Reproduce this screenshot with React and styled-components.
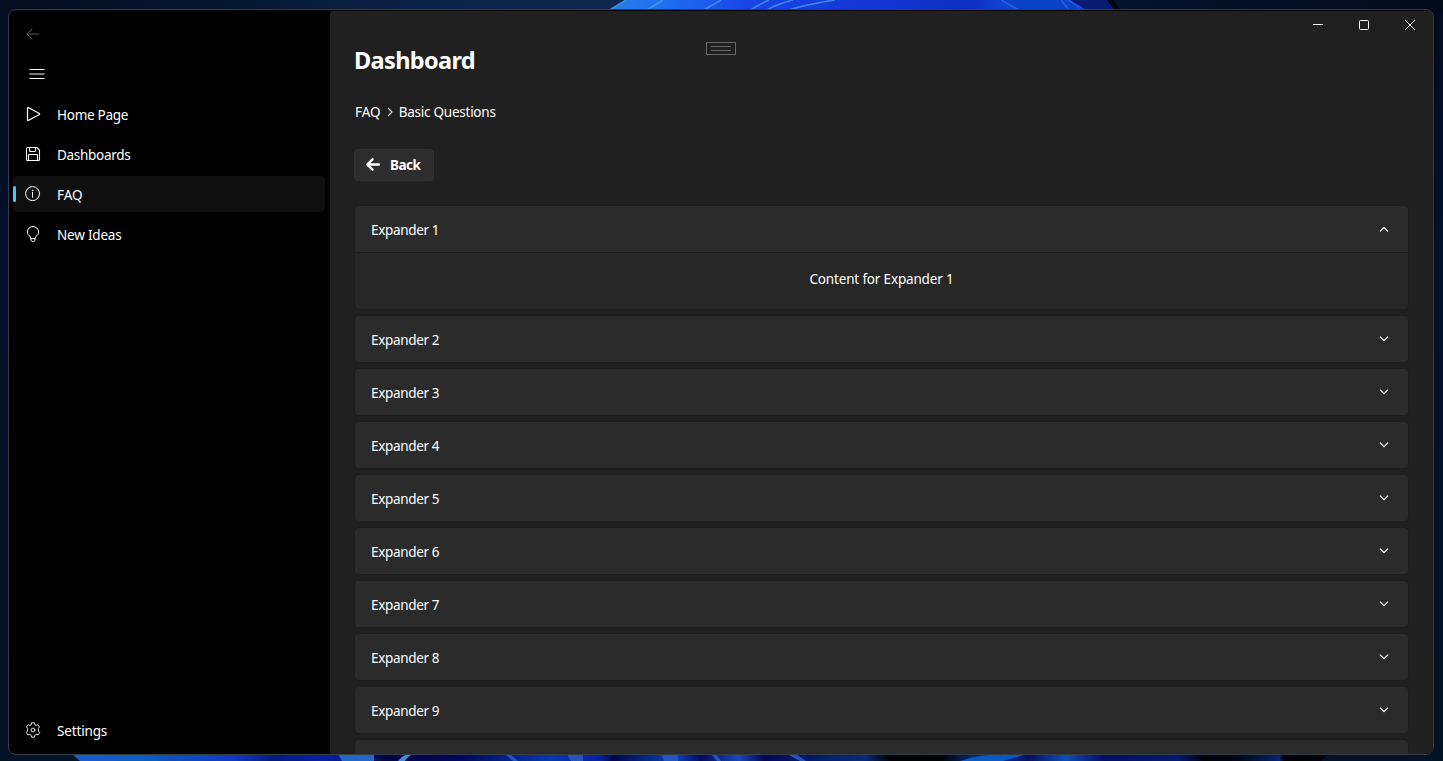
import React, { useState } from "react";
import styled, { createGlobalStyle } from "styled-components";

const GlobalStyle = createGlobalStyle`
  * { box-sizing: border-box; }
  html, body { margin: 0; width: 100%; height: 100%; overflow: hidden; background: #020c1c; }
  body {
    font-family: "Noto Sans", "Open Sans", sans-serif;
    font-size: 13.5px;
    line-height: 20px;
    color: #fff;
  }
  #root { height: 100%; }
  button { font: inherit; color: inherit; border: 0; background: none; padding: 0; }
  svg { display: block; flex: none; }
`;

const Desktop = styled.div`
  position: relative;
  height: 761px;
  width: 1443px;
  padding: 9px 9px 6px 8px;
  overflow: hidden;
`;

const WallpaperSvg = styled.svg`
  position: absolute;
  inset: 0;
`;

const Window = styled.div`
  position: relative;
  height: 746px;
  display: flex;
  border: 1px solid #333c4b;
  border-radius: 8px;
  overflow: hidden;
  background: #000;
`;

const Sidebar = styled.nav`
  width: 321px;
  flex: none;
  display: flex;
  flex-direction: column;
  padding: 9px 5px 6px 4px;
`;

const IconButton = styled.button`
  width: 40px;
  height: 30px;
  display: flex;
  align-items: center;
  justify-content: center;
  color: ${(p) => (p.$dim ? "#5a5a5a" : "#fff")};
`;

const MenuButton = styled(IconButton)`
  width: 48px;
  height: 40px;
  margin: 5px 0 2px;
`;

const NavList = styled.div`
  display: flex;
  flex-direction: column;
  gap: 4px;
  flex: 1;
`;

const NavItem = styled.button`
  position: relative;
  width: 312px;
  height: 36px;
  display: flex;
  align-items: center;
  text-align: left;
  gap: 16px;
  padding: 0 12px;
  border-radius: 4px;
  background: ${(p) => (p.$active ? "#0f0f0f" : "transparent")};
  &::before {
    content: "";
    display: ${(p) => (p.$active ? "block" : "none")};
    position: absolute;
    left: 0;
    top: 10px;
    width: 3px;
    height: 16px;
    border-radius: 2px;
    background: #4cc2ff;
  }
`;

const Label = styled.span`
  padding-top: ${(p) => (p.$raised ? 0 : 2)}px;
  letter-spacing: ${(p) => p.$track || 0}px;
  white-space: nowrap;
`;

const Main = styled.main`
  position: relative;
  flex: 1;
  min-width: 0;
  margin-top: 1px;
  background: #202020;
  border-top-left-radius: 3px;
  padding: 34px 24px 0;
`;

const Title = styled.h1`
  margin: 0;
  font-size: 23.5px;
  line-height: 30px;
  font-weight: 700;
  letter-spacing: -0.65px;
`;

const Crumbs = styled.div`
  display: flex;
  align-items: center;
  height: 20px;
  margin: 27px 0 27px 1px;
  gap: 6px;
`;

const BackButton = styled.button`
  display: flex;
  align-items: center;
  width: 80px;
  height: 32px;
  padding-left: 10px;
  gap: 9px;
  border: 1px solid #323232;
  border-radius: 4px;
  background: #2d2d2d;
  font-weight: 700;
`;

const Expanders = styled.div`
  display: flex;
  flex-direction: column;
  gap: 5px;
  margin-top: 24px;
`;

const Card = styled.section`
  border: 1px solid #1d1d1d;
  border-radius: 5px;
  overflow: hidden;
  width: 1055px;
`;

const CardHeader = styled.button`
  display: flex;
  align-items: center;
  justify-content: space-between;
  width: 100%;
  height: 46px;
  padding: 0 19px 0 16px;
  background: #2b2b2b;
`;

const NextCard = styled.div`
  height: 15px;
  width: 1055px;
  border: 1px solid #1d1d1d;
  border-bottom: 0;
  border-radius: 5px 5px 0 0;
  background: #2b2b2b;
`;

const CardBody = styled.div`
  height: 57px;
  display: flex;
  align-items: center;
  justify-content: center;
  padding-bottom: 6px;
  border-top: 1px solid #1d1d1d;
  background: #272727;
`;

const Caption = styled.div`
  position: absolute;
  top: 0;
  right: 0;
  display: flex;
`;

const CaptionButton = styled.button`
  width: 46px;
  height: 28px;
  display: flex;
  align-items: center;
  justify-content: center;
`;

const DebugBar = styled.div`
  position: absolute;
  left: 376px;
  top: 31px;
  width: 30px;
  height: 13px;
  border: 1px solid #686868;
  display: flex;
  align-items: center;
  justify-content: center;
  &::before {
    content: "";
    width: 20px;
    height: 3px;
    border: solid #686868;
    border-width: 1px 0;
  }
`;

const Stroke = ({ size = 16, width = 1, children }) => (
  <svg
    width={size}
    height={size}
    viewBox={`0 0 ${size} ${size}`}
    fill="none"
    stroke="currentColor"
    strokeWidth={width}
    strokeLinecap="round"
    strokeLinejoin="round"
  >
    {children}
  </svg>
);

const icons = {
  play: (
    <Stroke width={1.2}>
      <path d="M2.5 1.9v12.2c0 .4.4.6.8.4L14.4 8.5c.4-.3.4-.7 0-1L3.3 1.5c-.4-.2-.8 0-.8.4z" />
    </Stroke>
  ),
  save: (
    <Stroke width={1.1}>
      <path d="M2.5 1.5h9.3l2.7 2.7v9.3a1 1 0 0 1-1 1h-11a1 1 0 0 1-1-1v-11a1 1 0 0 1 1-1zM4.5 1.5v3a1 1 0 0 0 1 1h4a1 1 0 0 0 1-1v-3M3.5 14.5V9.3a.8.8 0 0 1 .8-.8h7.4a.8.8 0 0 1 .8.8v5.2" />
    </Stroke>
  ),
  info: (
    <Stroke>
      <circle cx="7.6" cy="7.6" r="7" />
      <path d="M7.5 6.5v4.7" />
      <circle cx="7.5" cy="4.5" r=".4" fill="currentColor" />
    </Stroke>
  ),
  bulb: (
    <Stroke>
      <path d="M5.8 12.3 5 10.2C3.1 9.1 2.4 7.8 2.4 6a5.6 5.5 0 0 1 11.2 0c0 1.8-.8 3.1-2.6 4.2l-.8 2.1zM5.8 12.3l.4 2.2c.1.7.5 1 1.1 1h1.4c.6 0 1-.3 1.1-1l.4-2.2" />
    </Stroke>
  ),
  gear: (
    <Stroke width={0.9}>
      <path d="M6.6.8h2.8l.4 1.8 1.3.7 1.8-.5L14.5 5l-1.2 1.5a5 5 0 0 1 0 2.5l1.4 1.4-1.5 2.4-1.9-.4-1.5.9-.5 1.9H6.7l-.5-1.9-1.5-.9-1.9.4-1.5-2.4 1.4-1.4a5 5 0 0 1 0-2.5L1.5 5l1.6-2.2 1.8.5 1.3-.7z" />
      <circle cx="8" cy="8" r="1.9" />
    </Stroke>
  ),
};

const Chevron = ({ open }) => (
  <Stroke size={10} width={1.15}>
    <path d={open ? "M1.3 7.1 5 3.5l3.7 3.6" : "M1.3 3 5 6.6l3.7-3.6"} />
  </Stroke>
);

const navItems = [
  { id: "play", label: "Home Page", track: -0.27 },
  { id: "save", label: "Dashboards", track: -0.29 },
  { id: "info", label: "FAQ", track: 0 },
  { id: "bulb", label: "New Ideas", track: -0.2 },
];

const stop = (o, c) => <stop key={o} offset={o} stopColor={c} />;

function Wallpaper() {
  return (
    <WallpaperSvg width="1443" height="761" viewBox="0 0 1443 761">
      <defs>
        <linearGradient id="sky">
          {stop(0, "#020c1c")}
          {stop(0.3, "#0b2148")}
          {stop(0.42, "#102850")}
          {stop(0.76, "#03142c")}
          {stop(1, "#010a19")}
        </linearGradient>
        <linearGradient id="side" x2="0" y2="1">
          {stop(0, "#020c20")}
          {stop(0.3, "#03102a")}
          {stop(1, "#041225")}
        </linearGradient>
        <linearGradient id="petal">
          {stop(0, "#2780e8")}
          {stop(0.12, "#1e6df0")}
          {stop(0.28, "#1a43e8")}
          {stop(0.5, "#1237d4")}
          {stop(0.7, "#0c2fc0")}
          {stop(0.88, "#2160f0")}
          {stop(1, "#0b2aa0")}
        </linearGradient>
        <linearGradient id="low" gradientUnits="userSpaceOnUse" x1="72" x2="1330" y1="0" y2="0">
          {stop(0, "#1a5fd0")}
          {stop(0.07, "#0c55bd")}
          {stop(0.13, "#1238c0")}
          {stop(0.16, "#06187c")}
          {stop(0.2, "#0920a5")}
          {stop(0.24, "#02105c")}
          {stop(0.25, "#010440")}
          {stop(0.31, "#01085c")}
          {stop(0.38, "#0838b0")}
          {stop(0.42, "#0920a0")}
          {stop(0.43, "#020648")}
          {stop(0.48, "#0b43b8")}
          {stop(0.5, "#020a60")}
          {stop(0.53, "#1a48b8")}
          {stop(0.55, "#010858")}
          {stop(0.6, "#04206b")}
          {stop(0.63, "#092b78")}
          {stop(0.65, "#000208")}
          {stop(0.69, "#000104")}
          {stop(0.73, "#0d3aa4")}
          {stop(0.76, "#070f62")}
          {stop(0.79, "#0f4db5")}
          {stop(0.82, "#040e68")}
          {stop(0.88, "#041a70")}
          {stop(0.9, "#000208")}
          {stop(0.93, "#000818")}
          {stop(0.96, "#082470")}
          {stop(0.963, "#000108")}
          {stop(1, "#00040c")}
        </linearGradient>
      </defs>
      <rect width="1443" height="761" fill="url(#side)" />
      <rect width="1443" height="12" fill="url(#sky)" />
      <path d="M608 11 626 0h486q7 5 10 11z" fill="url(#petal)" />
      <path d="M1001 0h65q11 6 15 11h-60z" fill="#0a43c8" />
      <path d="m1070 0 18 11h33l-7-11z" fill="#071b72" />
      <path d="m1107 0 8 11h7l-8-11z" fill="#010612" />
      <g fill="none" stroke="#4c99ea" strokeWidth="1.6" opacity=".8">
        <path d="m608 11 18-11M645 11l18-11M702 11l19-11M749 11q9-6 20-11M765 11q12-7 28-11M785 11q23-7 50-11" />
        <path d="m1001 0 20 11M1061 0l9 11" stroke="#286bea" />
      </g>
      <path d="M72 754h1260q-7 2-10 7H80z" fill="url(#low)" />
      <path d="m110 754 11 7h38l-10-7z" fill="#0c63be" opacity=".6" />
      <path d="M338 754h36v7h-32z" fill="#2368c8" />
      <path d="M398 761q4-5 9-7h6q-6 3-8 7z" fill="#438bd5" />
      <path d="M505 754h5l8 7h-5zM567 754h16v7h-12zM661 754h17v7h-14zM711 754h5l5 7h-4zM787 754h9l10 7h-6z" fill="#2755bd" />
      <path d="M960 761q20-7 48-7h20q-12 3-25 7z" fill="#095ac2" />
    </WallpaperSvg>
  );
}

export default function App() {
  const [open, setOpen] = useState(1);
  return (
    <>
      <GlobalStyle />
      <Desktop>
        <Wallpaper />
        <Window>
          <Sidebar>
            <IconButton $dim aria-label="Back">
              <Stroke>
                <path d="M14 8H2.5M7 3 2 8l5 5" />
              </Stroke>
            </IconButton>
            <MenuButton aria-label="Menu">
              <svg width="16" height="12" stroke="currentColor">
                <path d="M.5 1.5h15M.5 10.5h15" />
                <path d="M.5 6h15" opacity=".75" strokeWidth="1.3" />
              </svg>
            </MenuButton>
            <NavList>
              {navItems.map((n) => (
                <NavItem key={n.id} $active={n.id === "info"}>
                  {icons[n.id]}
                  <Label $track={n.track}>{n.label}</Label>
                </NavItem>
              ))}
            </NavList>
            <NavItem>
              {icons.gear}
              <Label $track={-0.15}>Settings</Label>
            </NavItem>
          </Sidebar>
          <Main>
            <Title>Dashboard</Title>
            <Crumbs>
              <Label $raised>FAQ</Label>
              <svg width="6" height="10" fill="none" stroke="#ddd" strokeWidth="1.2">
                <path d="m1 1 4 4-4 4" />
              </svg>
              <Label $raised $track={-0.24}>Basic Questions</Label>
            </Crumbs>
            <BackButton>
              <Stroke width={2.4}>
                <path d="M13.8 7.5H2.5M7.5 2.3 2.2 7.5l5.3 5.2" />
              </Stroke>
              <Label $raised $track={-0.5}>Back</Label>
            </BackButton>
            <Expanders>
              {Array.from({ length: 9 }, (_, i) => i + 1).map((n) => (
                <Card key={n}>
                  <CardHeader onClick={() => setOpen(open === n ? 0 : n)}>
                    <Label $track={-0.34}>Expander {n}</Label>
                    <Chevron open={open === n} />
                  </CardHeader>
                  {open === n && (
                    <CardBody>
                      <Label $track={-0.17}>Content for Expander {n}</Label>
                    </CardBody>
                  )}
                </Card>
              ))}
              <NextCard />
            </Expanders>
            <DebugBar />
            <Caption>
              <CaptionButton aria-label="Minimize">
                <svg width="10" height="10" stroke="#fff">
                  <path d="M0 4.5h10" />
                </svg>
              </CaptionButton>
              <CaptionButton aria-label="Maximize">
                <svg width="10" height="10" stroke="#fff" fill="none">
                  <rect x=".5" y=".5" width="9" height="9" rx="1" />
                </svg>
              </CaptionButton>
              <CaptionButton aria-label="Close">
                <svg width="10" height="10" stroke="#fff">
                  <path d="m0 0 10 10M10 0 0 10" />
                </svg>
              </CaptionButton>
            </Caption>
          </Main>
        </Window>
      </Desktop>
    </>
  );
}
